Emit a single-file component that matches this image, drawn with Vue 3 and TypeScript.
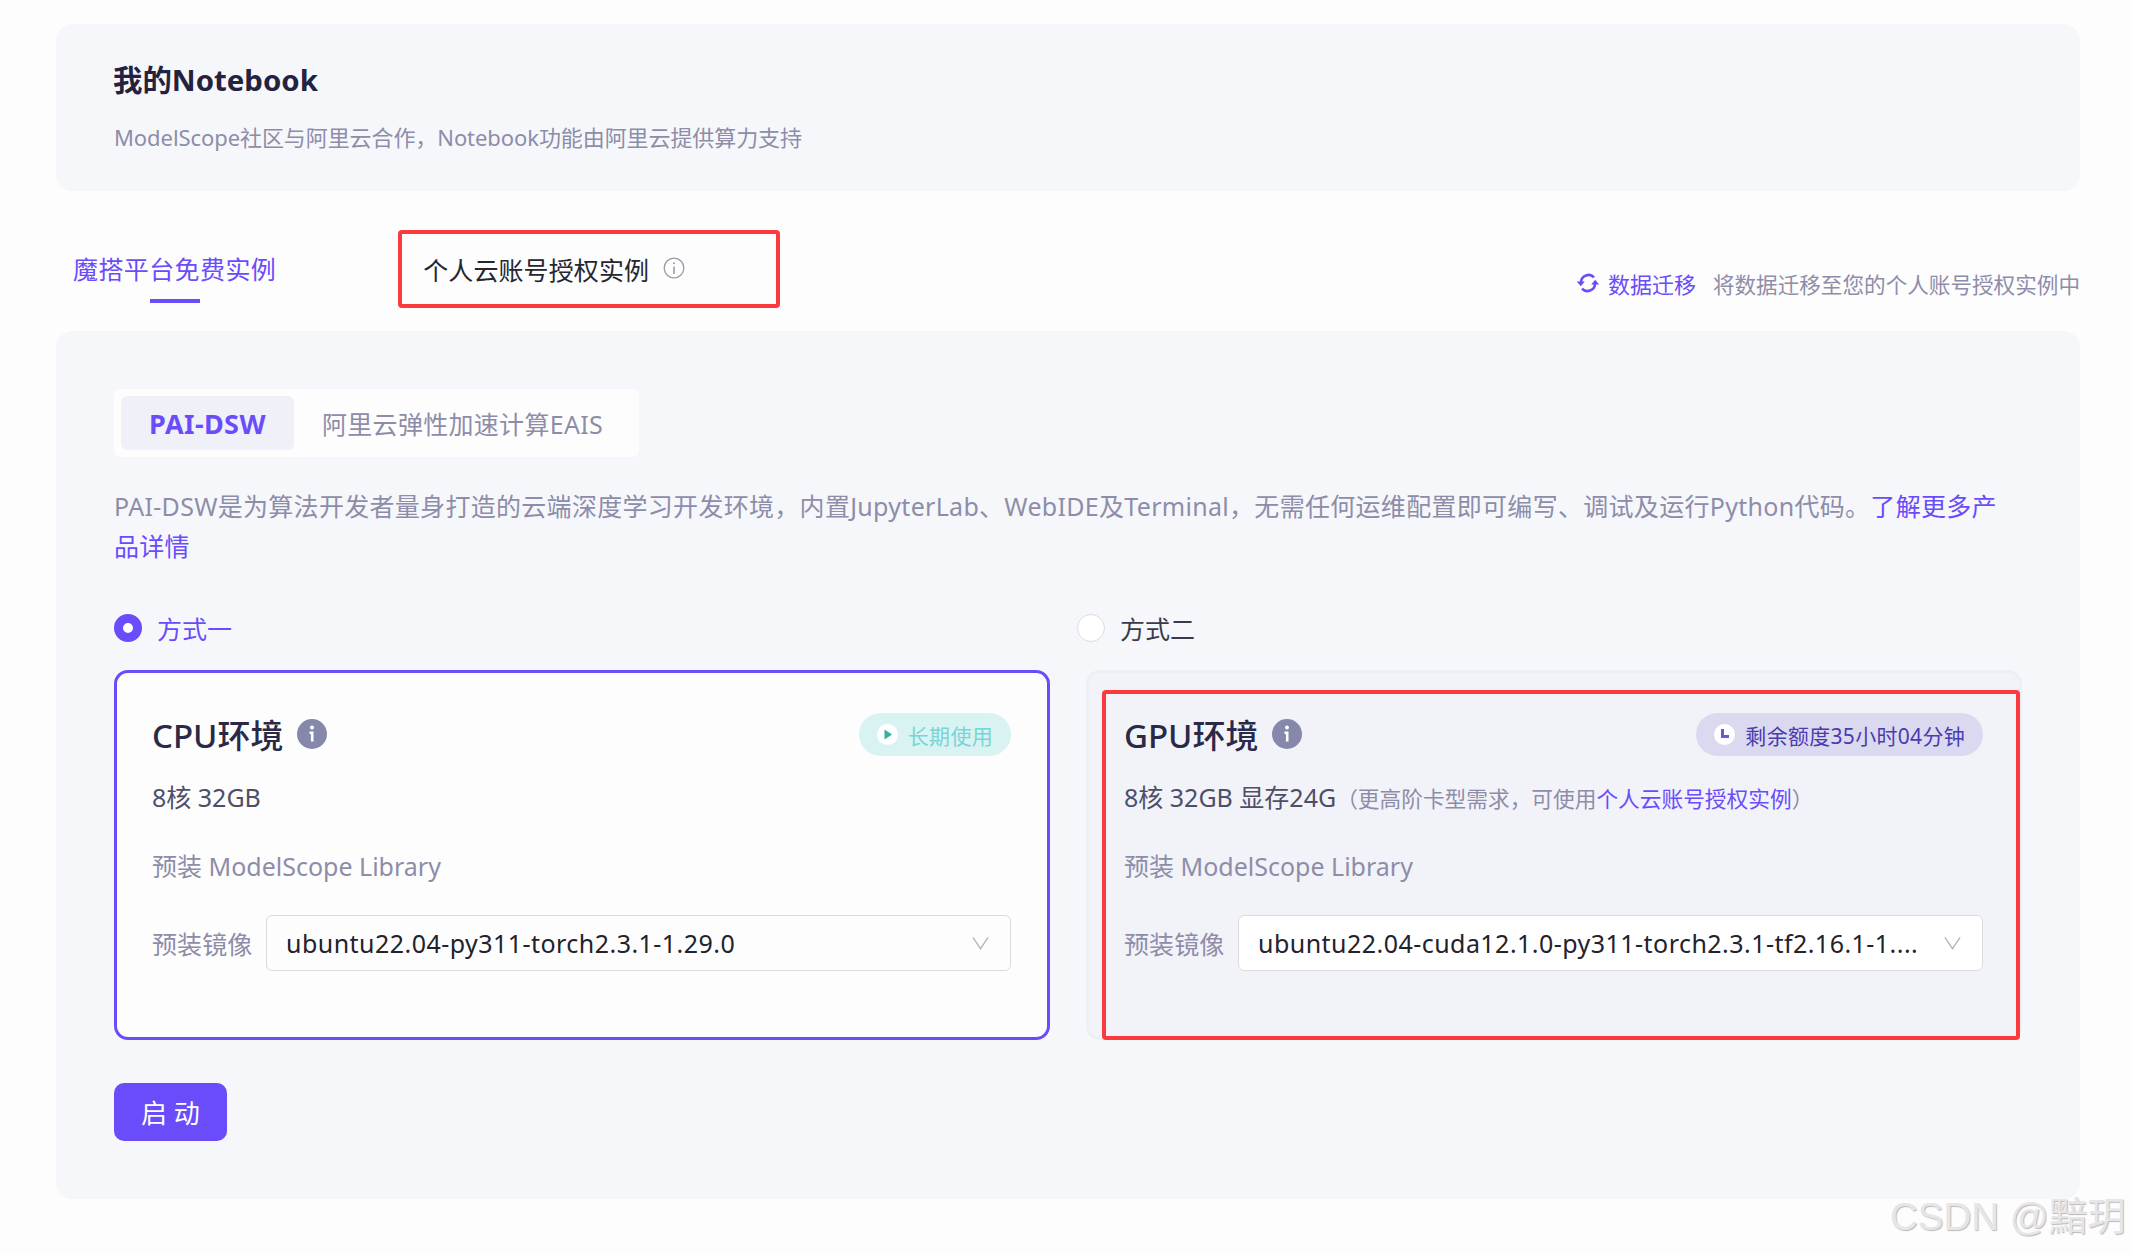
<script setup lang="ts">
interface Env {
  name: string
  spec: string
  image: string
}
const cpu: Env = { name: 'CPU环境', spec: '8核 32GB', image: 'ubuntu22.04-py311-torch2.3.1-1.29.0' }
const gpu: Env = { name: 'GPU环境', spec: '8核 32GB 显存24G', image: 'ubuntu22.04-cuda12.1.0-py311-torch2.3.1-tf2.16.1-1....' }
</script>

<template>
  <div class="page">
    <section class="intro">
      <h1 class="intro-title">我的Notebook</h1>
      <p class="intro-sub">ModelScope社区与阿里云合作，Notebook功能由阿里云提供算力支持</p>
    </section>

    <nav class="tabs">
      <div class="tab-active">
        <span class="tab-label">魔搭平台免费实例</span>
        <span class="tab-bar"></span>
      </div>
      <div class="tab-marked">
        <span>个人云账号授权实例</span>
        <svg class="tab-info" viewBox="0 0 22 22" fill="none" stroke="#9a9aa6" stroke-width="1.3">
          <circle cx="11" cy="11" r="9.8" />
          <path d="M11 9.5v7.5" stroke-width="1.6" />
          <circle cx="11" cy="6.2" r="1" fill="#9a9aa6" stroke="none" />
        </svg>
      </div>
      <div class="migrate">
        <svg class="migrate-icon" viewBox="0 0 24 24" fill="none" stroke="#6a4cfb" stroke-width="2.6">
          <path d="M5 11a7.5 7.5 0 0 1 13-4.6" />
          <path d="M19 13a7.5 7.5 0 0 1-13 4.6" />
          <path d="M0.8 10.5h8l-4 4.8z" fill="#6a4cfb" stroke="none" />
          <path d="M23.2 13.5h-8l4-4.8z" fill="#6a4cfb" stroke="none" />
        </svg>
        <span class="migrate-link">数据迁移</span>
        <span class="migrate-text">将数据迁移至您的个人账号授权实例中</span>
      </div>
    </nav>

    <section class="panel">
      <div class="segment">
        <div class="segment-on">PAI-DSW</div>
        <div class="segment-off">阿里云弹性加速计算EAIS</div>
      </div>

      <p class="desc">PAI-DSW是为算法开发者量身打造的云端深度学习开发环境，内置JupyterLab、WebIDE及Terminal，无需任何运维配置即可编写、调试及运行Python代码。<span class="link">了解更多产品详情</span></p>

      <div class="options">
        <div class="option">
          <label class="radio radio-on">
            <span class="radio-dot"></span>
            <span>方式一</span>
          </label>
          <div class="card card-on">
            <div class="card-head">
              <span class="card-name">{{ cpu.name }}</span>
              <svg class="card-info" viewBox="0 0 30 30">
                <circle cx="15" cy="15" r="15" fill="#8588aa" />
                <circle cx="15" cy="8.5" r="2" fill="#fff" />
                <path d="M12.5 12.5h4v10h-2.6v-7.6h-1.4z" fill="#fff" />
              </svg>
              <span class="pill pill-green">
                <span class="pill-dot">
                  <svg viewBox="0 0 21 21"><path d="M7.5 5.5l7.5 5-7.5 5z" fill="#2fb39c" /></svg>
                </span>
                长期使用
              </span>
            </div>
            <div class="spec">{{ cpu.spec }}</div>
            <div class="lib">预装 ModelScope Library</div>
            <div class="image-row">
              <span class="image-label">预装镜像</span>
              <div class="select">
                <span class="select-text">{{ cpu.image }}</span>
                <svg class="chevron" viewBox="0 0 20 16" fill="none" stroke="#b5b5bd" stroke-width="1.4"><path d="M2 2l8 12 8-12" /></svg>
              </div>
            </div>
          </div>
        </div>

        <div class="option">
          <label class="radio radio-off">
            <span class="radio-dot"></span>
            <span>方式二</span>
          </label>
          <div class="card card-off">
            <div class="card-head">
              <span class="card-name">{{ gpu.name }}</span>
              <svg class="card-info" viewBox="0 0 30 30">
                <circle cx="15" cy="15" r="15" fill="#8588aa" />
                <circle cx="15" cy="8.5" r="2" fill="#fff" />
                <path d="M12.5 12.5h4v10h-2.6v-7.6h-1.4z" fill="#fff" />
              </svg>
              <span class="pill pill-violet">
                <span class="pill-dot">
                  <svg viewBox="0 0 21 21"><path d="M7 5h3v6h5v3H7z" fill="#6a5acd" /></svg>
                </span>
                剩余额度35小时04分钟
              </span>
            </div>
            <div class="spec">{{ gpu.spec }}<span class="spec-note">（更高阶卡型需求，可使用<span class="link">个人云账号授权实例</span>）</span></div>
            <div class="lib">预装 ModelScope Library</div>
            <div class="image-row">
              <span class="image-label">预装镜像</span>
              <div class="select select-white">
                <span class="select-text">{{ gpu.image }}</span>
                <svg class="chevron" viewBox="0 0 20 16" fill="none" stroke="#b5b5bd" stroke-width="1.4"><path d="M2 2l8 12 8-12" /></svg>
              </div>
            </div>
            <div class="annotation"></div>
          </div>
        </div>
      </div>

      <button class="start" type="button">启 动</button>
    </section>

    <div class="watermark">CSDN @黯玥</div>
  </div>
</template>

<style>
html, body {
  margin: 0;
  background: #fdfdfe;
}
</style>

<style scoped>
.page {
  position: relative;
  box-sizing: border-box;
  width: 2132px;
  height: 1254px;
  padding: 24px 52px 0 56px;
  background: #fdfdfe;
  font-family: "Noto Sans", "Noto Sans CJK SC", sans-serif;
  overflow: hidden;
}

.intro {
  box-sizing: border-box;
  height: 167px;
  padding: 35px 57px 0;
  background: #f6f7fb;
  border-radius: 16px;
}
.intro-title {
  margin: 0;
  font-size: 29.4px;
  line-height: 42px;
  font-weight: 700;
  color: #24223f;
}
.intro-sub {
  margin: 20px 0 0 1px;
  font-size: 22px;
  line-height: 32px;
  letter-spacing: -0.08px;
  color: #8d8da9;
}

.tabs {
  display: flex;
  align-items: flex-start;
  box-sizing: border-box;
  height: 140px;
  padding-top: 39px;
}
.tab-active {
  display: flex;
  flex-direction: column;
  align-items: center;
  margin-left: 17px;
  padding-top: 22px;
}
.tab-label {
  font-size: 25px;
  line-height: 34px;
  letter-spacing: 0.4px;
  color: #6a4cfb;
}
.tab-bar {
  width: 50px;
  height: 4px;
  margin-top: 13px;
  background: #6a4cfb;
}
.tab-marked {
  display: flex;
  align-items: center;
  box-sizing: border-box;
  width: 382px;
  height: 78px;
  margin-left: 122px;
  padding-left: 21px;
  border: 4px solid #fb3a3d;
  border-radius: 4px;
  font-size: 25px;
  letter-spacing: 0.1px;
  color: #26262e;
}
.tab-info {
  width: 22px;
  height: 22px;
  margin-left: 14px;
  margin-top: -3px;
}
.migrate {
  display: flex;
  align-items: center;
  height: 34px;
  margin-left: auto;
  margin-top: 36px;
  font-size: 22px;
}
.migrate-icon {
  width: 24px;
  height: 24px;
  margin-right: 8px;
}
.migrate-link {
  color: #6a4cfb;
}
.migrate-text {
  margin-left: 17px;
  font-size: 21.6px;
  color: #8d8da9;
}

.panel {
  box-sizing: border-box;
  height: 868px;
  padding: 58px 58px 0;
  background: #f6f7fb;
  border-radius: 16px;
}
.segment {
  display: flex;
  align-items: center;
  box-sizing: border-box;
  width: 525px;
  height: 68px;
  padding: 0 7px;
  background: #fdfdfe;
  border-radius: 6px;
}
.segment-on {
  display: flex;
  align-items: center;
  justify-content: center;
  width: 173px;
  height: 54px;
  border-radius: 6px;
  background: #f0f1f8;
  color: #6a4cfb;
  font-size: 27px;
  font-weight: 700;
  letter-spacing: 0.4px;
}
.segment-off {
  margin-left: 28px;
  font-size: 25px;
  letter-spacing: 0.3px;
  color: #8d8da9;
}
.desc {
  max-width: 1895px;
  margin: 29px 0 0;
  font-size: 25px;
  line-height: 40px;
  letter-spacing: 0.3px;
  color: #8d8da9;
}
.link {
  color: #6a4cfb;
}

.options {
  display: grid;
  grid-template-columns: 936px 936px;
  column-gap: 36px;
  margin-top: 48px;
}
.radio {
  display: flex;
  align-items: center;
  gap: 15px;
  height: 28px;
  font-size: 25px;
}
.radio-on {
  color: #6a4cfb;
}
.radio-off {
  margin-left: -9px;
  color: #3a3a4c;
}
.radio-dot {
  box-sizing: border-box;
  width: 28px;
  height: 28px;
  border-radius: 50%;
}
.radio-on .radio-dot {
  border: 9px solid #6a4cfb;
  background: #fff;
}
.radio-off .radio-dot {
  border: 1px solid #dcdce4;
  background: #fff;
}

.card {
  position: relative;
  box-sizing: border-box;
  height: 370px;
  margin-top: 28px;
  padding: 40px 36px 0 35px;
  border-radius: 14px;
}
.card-on {
  border: 3px solid #6a4cfb;
  background: #fdfdfe;
}
.card-off {
  border: 3px solid #eeeff5;
  background: #f2f3f9;
}
.card-head {
  display: flex;
  align-items: center;
  height: 43px;
}
.card-name {
  margin-top: -2px;
  font-size: 33px;
  font-weight: 500;
  color: #2a2a48;
}
.card-info {
  width: 30px;
  height: 30px;
  margin-left: 14px;
  margin-top: -2px;
}
.pill {
  display: flex;
  align-items: center;
  height: 43px;
  margin-left: auto;
  padding: 0 18px;
  border-radius: 22px;
  font-size: 21px;
  letter-spacing: 0.3px;
}
.pill-green {
  background: #d9f3f3;
  color: #78d5d5;
}
.pill-violet {
  background: #dad9ef;
  color: #4a3cb0;
}
.pill-dot {
  width: 21px;
  height: 21px;
  margin-right: 10px;
  border-radius: 50%;
  background: #fff;
}
.pill-dot svg {
  display: block;
  width: 21px;
  height: 21px;
}
.spec {
  height: 34px;
  margin-top: 24px;
  font-size: 25px;
  line-height: 34px;
  color: #4e4e66;
}
.spec-note {
  font-size: 21.7px;
  line-height: 20px;
  color: #8d8da9;
}
.lib {
  margin-top: 35px;
  font-size: 25px;
  line-height: 34px;
  color: #8d8da9;
}
.image-row {
  display: flex;
  align-items: center;
  margin-top: 32px;
}
.image-label {
  flex: none;
  width: 114px;
  font-size: 25px;
  letter-spacing: 0.1px;
  color: #8d8da9;
}
.select {
  display: flex;
  align-items: center;
  flex: 1;
  min-width: 0;
  box-sizing: border-box;
  height: 56px;
  padding: 0 20px 0 19px;
  background: #fdfdfe;
  border: 1px solid #dbdbdf;
  border-radius: 6px;
}
.select-white {
  background: #fff;
}
.select-text {
  flex: 1;
  min-width: 0;
  white-space: nowrap;
  font-size: 25px;
  letter-spacing: 0.46px;
  color: #22222c;
}
.chevron {
  flex: none;
  width: 19px;
  height: 16px;
  margin-left: 20px;
}
.annotation {
  position: absolute;
  left: 13px;
  top: 17px;
  width: 918px;
  height: 350px;
  box-sizing: border-box;
  border: 4px solid #fb3a3d;
  border-radius: 4px;
  pointer-events: none;
}

.start {
  display: block;
  width: 113px;
  height: 58px;
  margin-top: 43px;
  padding: 0;
  border: none;
  border-radius: 10px;
  background: #6a4cfb;
  color: #fff;
  font-family: inherit;
  font-size: 26px;
  letter-spacing: 0;
}

.watermark {
  position: absolute;
  left: 1890px;
  top: 1192px;
  font-family: "Liberation Sans", "Noto Sans CJK SC", sans-serif;
  font-size: 38.5px;
  line-height: 50px;
  white-space: nowrap;
  color: #e6e6e8;
  text-shadow: 1px 1px 1px #b9b9bc;
}
</style>
